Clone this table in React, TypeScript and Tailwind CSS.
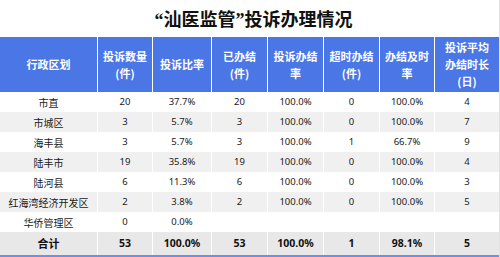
import React from "react";

const cols = "grid grid-cols-[97px_54px_58px_55px_55px_55px_54px_64px] gap-x-px";

const headers: string[][] = [
  ["行政区划"],
  ["投诉数量", "(件)"],
  ["投诉比率"],
  ["已办结", "(件)"],
  ["投诉办结", "率"],
  ["超时办结", "(件)"],
  ["办结及时", "率"],
  ["投诉平均", "办结时长", "(日)"],
];

const rows: string[][] = [
  ["市直", "20", "37.7%", "20", "100.0%", "0", "100.0%", "4"],
  ["市城区", "3", "5.7%", "3", "100.0%", "0", "100.0%", "7"],
  ["海丰县", "3", "5.7%", "3", "100.0%", "1", "66.7%", "9"],
  ["陆丰市", "19", "35.8%", "19", "100.0%", "0", "100.0%", "4"],
  ["陆河县", "6", "11.3%", "6", "100.0%", "0", "100.0%", "3"],
  ["红海湾经济开发区", "2", "3.8%", "2", "100.0%", "0", "100.0%", "5"],
  ["华侨管理区", "0", "0.0%", "", "", "", "", ""],
];

const total = ["合计", "53", "100.0%", "53", "100.0%", "1", "98.1%", "5"];

const cjk = '"Noto Sans CJK SC", sans-serif';

export default function App() {
  return (
    <div className="w-[500px] h-[257px] bg-white overflow-hidden flex flex-col border-r border-[#e2e2e2]" style={{ fontFamily: '"Noto Sans", "Noto Sans CJK SC", sans-serif' }}>
      <div className="h-[37px] flex items-center justify-center pl-[8px] pt-[2px]">
        <span className="text-[18px] font-bold text-[#111] leading-none" style={{ fontFamily: '"Liberation Serif", "Noto Sans CJK SC", serif' }}>
          “汕医监管”投诉办理情况
        </span>
      </div>
      <div className={`${cols} bg-white h-[55px]`}>
        {headers.map((h, i) => (
          <div key={i} className="bg-[#4a76e6] text-white font-bold text-[11px] leading-[17px] flex flex-col items-center justify-center text-center" style={{ fontFamily: cjk }}>
            {h.map((l, j) => (
              <div key={j} className="block">{l}</div>
            ))}
          </div>
        ))}
      </div>
      {rows.map((r, i) => (
        <div key={i} className={`${cols} bg-white h-[20px]`}>
          {r.map((c, j) => (
            <div key={j} className={`${i % 2 === 1 ? "bg-[#f0f0f0]" : "bg-white"} flex items-center justify-center text-[#1a1a1a] ${j === 0 ? "text-[10px]" : "text-[9.5px]"}`} style={j === 0 ? { fontFamily: cjk } : undefined}>
              {c}
            </div>
          ))}
        </div>
      ))}
      <div className={`${cols} bg-white h-[23px]`}>
        {total.map((c, j) => (
          <div key={j} className={`bg-[#e8e8e8] flex items-center justify-center font-bold text-[#111] ${j === 0 ? "text-[11px]" : "text-[10.5px]"}`} style={j === 0 ? { fontFamily: cjk } : undefined}>
            {c}
          </div>
        ))}
      </div>
      <div className="h-[2px] bg-[#6d90e8]" />
    </div>
  );
}
